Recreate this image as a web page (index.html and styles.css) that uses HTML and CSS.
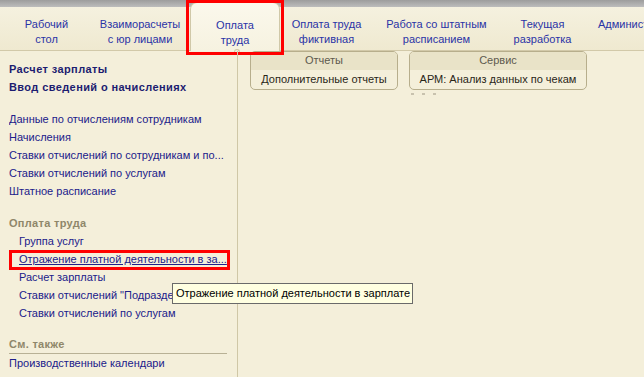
FILE: index.html
```html
<!DOCTYPE html>
<html lang="ru">
<head>
<meta charset="utf-8">
<title>Оплата труда</title>
<link rel="stylesheet" href="styles.css">
</head>
<body>
<div class="screen">
  <div class="topbar"></div>
  <nav class="tabs">
    <div class="tab t1">Рабочий<br>стол</div>
    <div class="tab t2">Взаиморасчеты<br>с юр лицами</div>
    <div class="tab t3 active">Оплата<br>труда<span class="notch"></span></div>
    <div class="tab t4">Оплата труда<br>фиктивная</div>
    <div class="tab t5">Работа со штатным<br>расписанием</div>
    <div class="tab t6">Текущая<br>разработка</div>
    <div class="tab t7">Администрирование</div>
    <div class="hl hl-tab"></div>
  </nav>
  <div class="main">
    <aside class="side">
      <div class="item bold">Расчет зарплаты</div>
      <div class="item bold">Ввод сведений о начислениях</div>
      <div class="item gap">Данные по отчислениям сотрудникам</div>
      <div class="item">Начисления</div>
      <div class="item">Ставки отчислений по сотрудникам и по...</div>
      <div class="item">Ставки отчислений по услугам</div>
      <div class="item">Штатное расписание</div>
      <div class="head gap">Оплата труда</div>
      <div class="item sub">Группа услуг</div>
      <div class="item sub link">Отражение платной деятельности в за...</div>
      <div class="item sub">Расчет зарплаты</div>
      <div class="item sub">Ставки отчислений "Подразделения"</div>
      <div class="item sub">Ставки отчислений по услугам</div>
      <div class="head gap line">См. также</div>
      <div class="item">Производственные календари</div>
      <div class="hl hl-link"></div>
    </aside>
    <section class="content">
      <div class="groups">
        <div class="group g1">
          <div class="ghead">Отчеты</div>
          <div class="gbody">Дополнительные отчеты</div>
        </div>
        <div class="group g2">
          <div class="ghead">Сервис</div>
          <div class="gbody">АРМ: Анализ данных по чекам</div>
        </div>
      </div>
      <div class="dots"><i></i><i></i><i></i></div>
    </section>
  </div>
  <div class="tooltip">Отражение платной деятельности в зарплате</div>
</div>
</body>
</html>
```
FILE: styles.css
```css
* { box-sizing: border-box; }
html, body { margin: 0; padding: 0; }
body {
  font-family: "Liberation Sans", Arial, sans-serif;
  font-size: 11px;
  background: #f4efda;
  color: #20208a;
}
.screen {
  position: relative;
  width: 644px;
  height: 377px;
  overflow: hidden;
  background: #f4efda;
}
.topbar {
  height: 7px;
  background: linear-gradient(#9d9d9d, #bdbdbd);
}
.tabs {
  position: relative;
  display: flex;
  height: 44px;
  background: linear-gradient(#f5f1df, #efe9d0);
  border-bottom: 1px solid #d2c9a9;
  white-space: nowrap;
}
.tab {
  position: relative;
  flex-shrink: 0;
  text-align: center;
  line-height: 15px;
  padding-top: 10px;
  color: #2a33a6;
  font-size: 11px;
}
.t1 { width: 93px; }
.t2 { width: 94px; }
.t3 { width: 98px; }
.t4 { width: 83px; }
.t5 { width: 137px; }
.t6 { width: 75px; }
.t7 { width: 80px; padding-left: 18px; text-align: left; }
.tab.active {
  margin-top: -5px;
  padding-top: 15px;
  height: 49px;
  margin-left: 3px;
  margin-right: 5px;
  width: 90px;
  background: linear-gradient(#fbf8ec, #f6f2e0);
  border: 1px solid #d0c8a8;
  border-bottom: none;
  border-radius: 7px 7px 0 0;
}
.notch {
  position: absolute;
  left: 43px;
  bottom: -1px;
  width: 6px;
  height: 3px;
  border: 1px solid #d0c8a8;
  border-bottom: none;
  border-radius: 3px 3px 0 0;
  background: #f4efda;
}
.hl {
  position: absolute;
  border: 3px solid #ff0000;
  pointer-events: none;
}
.hl-tab {
  left: 186px;
  top: -7px;
  width: 98px;
  height: 55px;
}
.main {
  display: flex;
  height: 326px;
}
.side {
  position: relative;
  flex-shrink: 0;
  width: 238px;
  border-right: 1px solid #cfc7a6;
  padding: 10px 10px 0 9px;
}
.item {
  line-height: 18px;
  color: #20208a;
  white-space: nowrap;
  overflow: hidden;
}
.item.bold { font-weight: bold; color: #1c1c70; line-height: 17.5px; letter-spacing: 0.4px; }
.item.sub { padding-left: 10px; }
.item.link { text-decoration: underline; }
.gap { margin-top: 14px; }
.head {
  font-weight: bold;
  color: #8f876a;
  line-height: 18px;
  letter-spacing: 0.3px;
}
.head.line {
  line-height: 17px;
  border-bottom: 1px solid #b8b195;
}
.hl-link {
  left: 9px;
  top: 199px;
  width: 221px;
  height: 20px;
}
.content {
  flex: 1;
  padding-left: 12px;
}
.groups {
  display: flex;
  gap: 11px;
}
.group {
  flex-shrink: 0;
  height: 39px;
  border: 1px solid #b7ae8c;
  border-radius: 5px;
  overflow: hidden;
  background: #f4efda;
  text-align: center;
}
.g1 { width: 148px; }
.g2 { width: 178px; }
.ghead {
  height: 18px;
  line-height: 17px;
  background: #e9e3c8;
  color: #5e5a4e;
  font-size: 11px;
}
.gbody {
  line-height: 19px;
  color: #2a2618;
  font-size: 11px;
}
.dots {
  display: flex;
  gap: 8px;
  margin: 3px 0 0 161px;
}
.dots i {
  width: 3px;
  height: 2px;
  background: #c8c2ae;
}
.tooltip {
  position: absolute;
  left: 172px;
  top: 283px;
  width: 241px;
  height: 21px;
  line-height: 19px;
  padding-left: 3px;
  background: #ffffe1;
  border: 1px solid #6a6a6a;
  color: #000;
  font-size: 11px;
  white-space: nowrap;
}
```
